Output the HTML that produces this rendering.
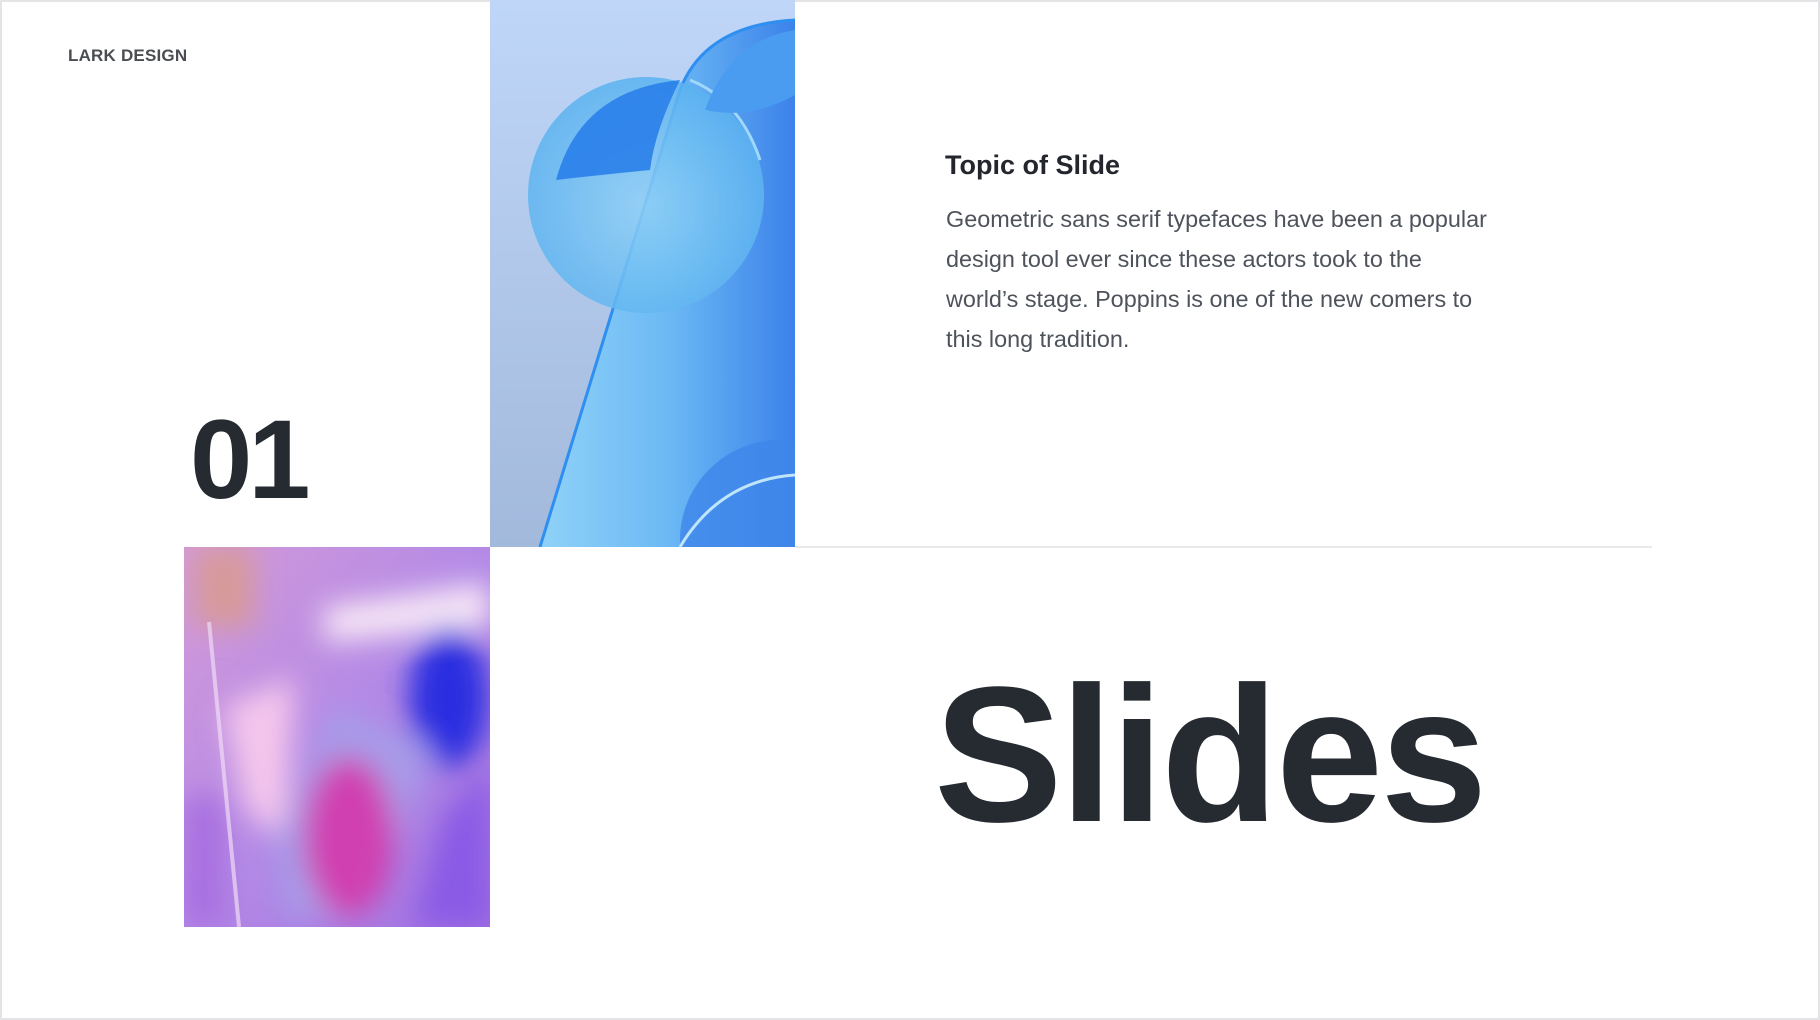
<!DOCTYPE html>
<html><head><meta charset="utf-8"><style>
*{margin:0;padding:0;box-sizing:border-box}
body{width:1820px;height:1020px;background:#fff;position:relative;overflow:hidden;font-family:"Liberation Sans",sans-serif;color:#2a2f36}
.frame{position:absolute;left:0;top:0;width:1820px;height:1020px;border:2px solid #e4e4e6}
.abs{position:absolute;white-space:nowrap}
</style></head><body>
<div class="frame"></div>
<div class="abs" style="left:68px;top:46px;font-size:17px;font-weight:bold;color:#4a4d52;letter-spacing:0.2px">LARK DESIGN</div>

<svg class="abs" style="left:490px;top:0" width="305" height="547" viewBox="0 0 305 547">
<defs>
<linearGradient id="bg" x1="0" y1="0" x2="0" y2="1"><stop offset="0" stop-color="#bfd6f8"/><stop offset="1" stop-color="#a2b9dc"/></linearGradient>
<linearGradient id="bar" x1="0" y1="0" x2="1" y2="0"><stop offset="0" stop-color="#8fd2f8"/><stop offset="0.5" stop-color="#6cb9f4"/><stop offset="1" stop-color="#3c82ea"/></linearGradient>
<radialGradient id="bub" cx="0.5" cy="0.55" r="0.55"><stop offset="0" stop-color="#8fd0f6"/><stop offset="1" stop-color="#5ab2f0"/></radialGradient>
</defs>
<rect width="305" height="547" fill="url(#bg)"/>
<path d="M50 547 L190 90 Q215 25 305 20 L305 547 Z" fill="url(#bar)"/>
<path d="M50 547 L190 90 Q215 25 305 20" fill="none" stroke="#2f8ff0" stroke-width="3"/>
<circle cx="156" cy="195" r="118" fill="url(#bub)" opacity="0.85"/>
<path d="M66 180 Q90 90 190 80 Q165 130 160 170 Q110 175 66 180Z" fill="#2a80ea" opacity="0.9"/>
<path d="M200 80 Q250 100 270 160" stroke="#9fd8fa" stroke-width="3" fill="none"/>
<path d="M305 30 Q240 40 215 110 Q260 120 305 95Z" fill="#4a9cf0"/>
<circle cx="290" cy="540" r="100" fill="#3e86ea" opacity="0.8"/>
<path d="M190 547 Q230 480 305 475" stroke="#bfe5fb" stroke-width="3" fill="none"/>
</svg>

<svg class="abs" style="left:184px;top:547px" width="306" height="380" viewBox="0 0 306 380">
<defs>
<filter id="bl"><feGaussianBlur stdDeviation="14"/></filter>
<linearGradient id="pg" x1="0" y1="0" x2="1" y2="1"><stop offset="0" stop-color="#d49ad8"/><stop offset="0.5" stop-color="#b48ae6"/><stop offset="1" stop-color="#a070e0"/></linearGradient>
</defs>
<rect width="306" height="380" fill="url(#pg)"/>
<g filter="url(#bl)">
<rect x="10" y="0" width="60" height="80" fill="#d79a9a"/>
<path d="M140 60 L306 35 L306 80 L140 95Z" fill="#f6e6f6"/>
<path d="M40 160 L110 130 L100 300 L60 260Z" fill="#f4c6ec"/>
<ellipse cx="265" cy="150" rx="40" ry="70" fill="#2a2ee0"/>
<path d="M90 290 L150 160 L250 200 L180 370 L100 370Z" fill="#a79be8"/>
<ellipse cx="165" cy="290" rx="45" ry="80" fill="#d040b0"/>
<path d="M260 270 L306 220 L306 380 L230 380Z" fill="#8a5ae6"/>
<rect x="0" y="250" width="40" height="130" fill="#a86ee0"/>
</g>
<path d="M25 75 L55 380" stroke="#f0daf6" stroke-width="4" opacity="0.7"/>
</svg>

<div class="abs" style="left:190px;top:404px;font-size:112px;font-weight:bold;line-height:1;letter-spacing:-4px;color:#262a31">01</div>

<div class="abs" style="left:945px;top:150px;font-size:27px;font-weight:bold;color:#23272d">Topic of Slide</div>
<div class="abs" style="left:946px;top:199px;font-size:23.4px;line-height:40px;color:#4e535b">Geometric sans serif typefaces have been a popular<br>design tool ever since these actors took to the<br>world’s stage. Poppins is one of the new comers to<br>this long tradition.</div>

<div class="abs" style="left:795px;top:546px;width:857px;height:2px;background:#e8e9eb"></div>

<div class="abs" style="left:934px;top:658px;font-size:193px;font-weight:bold;line-height:1;color:#262b32;letter-spacing:-3px">Slides</div>
</body></html>
